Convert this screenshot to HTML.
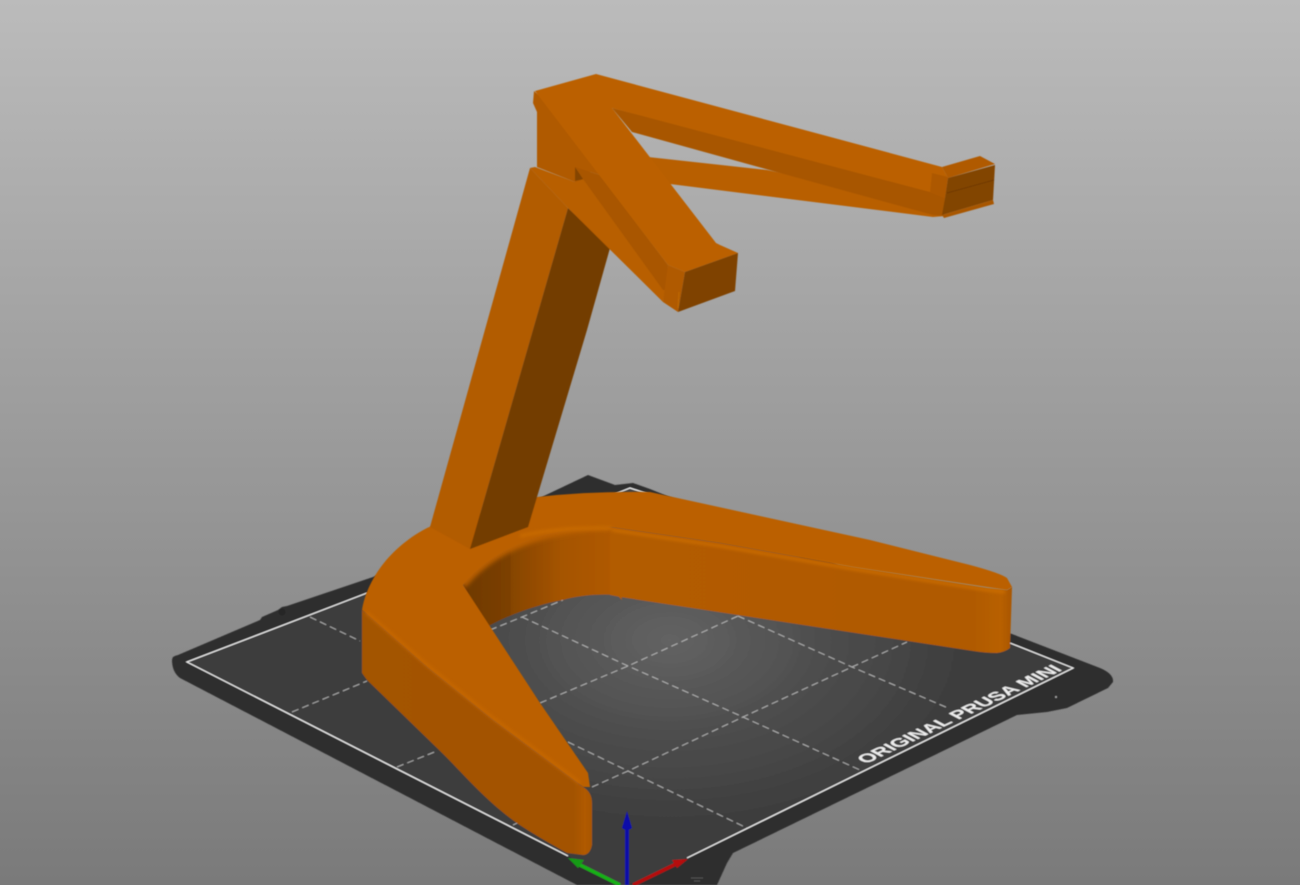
<!DOCTYPE html>
<html>
<head>
<meta charset="utf-8">
<style>
html,body{margin:0;padding:0;width:1300px;height:885px;overflow:hidden;background:#999}
svg{display:block}
text{font-family:"Liberation Sans",sans-serif}
</style>
</head>
<body>
<svg width="1300" height="885" viewBox="0 0 1300 885" xmlns="http://www.w3.org/2000/svg">
<defs>
<linearGradient id="bg" x1="0" y1="0" x2="0" y2="1">
<stop offset="0" stop-color="#bbbbbb"/><stop offset="1" stop-color="#7a7a7a"/>
</linearGradient>
<radialGradient id="plate" gradientUnits="userSpaceOnUse" cx="670" cy="640" r="300" gradientTransform="translate(670 640) scale(1 .62) translate(-670 -640)">
<stop offset="0" stop-color="#636363"/><stop offset=".5" stop-color="#4e4e4e"/><stop offset="1" stop-color="#3d3d3d"/>
</radialGradient>
<linearGradient id="wall" gradientUnits="userSpaceOnUse" x1="465" y1="0" x2="625" y2="0">
<stop offset="0" stop-color="#6f3900"/><stop offset=".28" stop-color="#7c4000"/><stop offset=".29" stop-color="#864500"/><stop offset=".6" stop-color="#a55400"/><stop offset="1" stop-color="#b25b00"/>
</linearGradient>
<linearGradient id="rside" gradientUnits="userSpaceOnUse" x1="620" y1="0" x2="1012" y2="0">
<stop offset="0" stop-color="#b25b00"/><stop offset=".9" stop-color="#b05a00"/><stop offset=".97" stop-color="#b86000"/><stop offset="1" stop-color="#a95600"/>
</linearGradient>
<linearGradient id="lside" gradientUnits="userSpaceOnUse" x1="362" y1="0" x2="592" y2="0">
<stop offset="0" stop-color="#a35400"/><stop offset=".92" stop-color="#a35300"/><stop offset=".97" stop-color="#b05a00"/><stop offset="1" stop-color="#a85600"/>
</linearGradient>
<filter id="b1" filterUnits="userSpaceOnUse" x="340" y="480" width="700" height="340"><feGaussianBlur stdDeviation="1.6"/></filter>
<filter id="b2" filterUnits="userSpaceOnUse" x="340" y="480" width="700" height="340"><feGaussianBlur stdDeviation="2.5"/></filter>
<filter id="b0" filterUnits="userSpaceOnUse" x="0" y="0" width="1300" height="885"><feGaussianBlur stdDeviation=".4"/></filter>
</defs>

<rect width="1300" height="885" fill="url(#bg)"/>

<g filter="url(#b0)">
<!-- bed -->
<path fill="#2f2f2f" d="M172,660 Q172,656 178,655 L260,620 L262,617 L278,610 L282,607 L287,606 L373,577 L588,475 L615,485 L633,483 L650,489 L1012,634 L1100,668 Q1114,674 1113,682 L1108,688 L1067,708 L1047,712 L1017,715 L733,853 L727,863 L717,885 L577,885 L180,678 Q172,672 172,660 Z"/>
<path fill="url(#plate)" d="M187,662 L367,593 L620,492 L630,488 L1073,668 L687,858 L628,885 L620,885 L568,856 Z"/>
<path fill="none" stroke="#f2f2f2" stroke-width="1.2" d="M568,856 L187,662 L367,593 M600,500 L620,492 L630,488 L648,494 M1010,643 L1073,668 L687,858"/>
<!-- grid -->
<g fill="none" stroke="#d6d6d6" stroke-width="1" stroke-dasharray="7 4" opacity=".72">
<path d="M292,712 L367,681 M490,630 L522,617 L563,600"/>
<path d="M397,767 L437,751 M540,703 L628,666 L738,616"/>
<path d="M513,825 L530,817 M592,787 L628,771 L743,717 L852,667 L907,642"/>
<path d="M310,617 L360,641"/>
<path d="M522,617 L628,666 L743,717 L860,770"/>
<path d="M568,742 L628,771 L747,828"/>
<path d="M738,616 L852,667 L948,708"/>
</g>
<text transform="matrix(0.9,-0.43,0.88,0.47,866,764)" font-size="18" font-weight="700" fill="#eeeeee" textLength="219" lengthAdjust="spacingAndGlyphs">ORIGINAL PRUSA MINI</text>
<circle cx="1056" cy="697" r="1" fill="#aaa"/>
<path d="M691,878 L703,878 M694,881 L700,881" stroke="#555" stroke-width="1"/>
<circle cx="282" cy="612" r="3.5" fill="#262626"/>

<!-- axes -->
<path d="M620,885 L578,864" stroke="#17b017" stroke-width="3.5"/>
<path d="M568,858 L584,860 L578,868 Z" fill="#149a14"/>
<path d="M633,885 L676,864" stroke="#b50d0d" stroke-width="3.5"/>
<path d="M688,859 L672,860 L677,868 Z" fill="#b50d0d"/>
<path d="M627,885 L627,828" stroke="#0a0aa8" stroke-width="4"/>
<path d="M627,811 L632,828 Q627,832 622,828 Z" fill="#0a0aa8"/>

<!-- wall -->
<path fill="url(#wall)" d="M463,585 C500,540 560,528 610,527 L622,600 L617,595 C600,594 580,595 563,600 C540,604 510,614 487,627 L470,600 Z"/>
<!-- right arm side -->
<path fill="url(#rside)" d="M610,527 L720,543 L853,567 L987,588 L1007,590 L1012,587 L1010,648 Q1005,652 997,653 Q985,653 973,651 L620,597 L610,595 Z"/>
<!-- left arm side -->
<path fill="url(#lside)" d="M362,610 L427,667 L493,720 L560,770 L583,787 Q592,792 592,803 L592,845 Q590,855 583,855 L567,853 C540,838 520,826 510,818 C480,795 460,770 437,748 L367,680 L362,673 Z"/>
</g>
<!-- soft lip under the top face -->
<path filter="url(#b2)" fill="none" stroke="#bb6100" stroke-width="7" d="M463,585 C500,540 560,528 610,527"/>
<g filter="url(#b0)">
<!-- top face -->
<path fill="#bb6100" d="M362,610 C366,585 385,550 427,528 L445,520 L500,510 L537,497 Q590,491 650,492 L870,540 L970,565 Q1000,573 1007,578 L1012,587 L1007,590 L853,567 L720,543 L610,527 C560,528 500,540 463,585 L540,703 L588,773 L590,787 L583,787 L493,720 L427,667 Z"/>
</g>
<!-- ridges -->
<g fill="none">
<path filter="url(#b1)" stroke="#cf7000" stroke-width="2.5" d="M612,530 L720,546 L853,569 L987,590 L1005,592"/>
<path filter="url(#b1)" stroke="#c66800" stroke-width="3" d="M366,612 L427,665 Q460,692 493,718 L560,768 L580,783"/>
<path filter="url(#b1)" stroke="#c96c00" stroke-width="3" d="M520,536 C550,529 580,528 612,528"/>
</g>

<g filter="url(#b0)">
<!-- column -->
<path fill="#b25c00" d="M430,527 L530,168 L568,208 L470,549 Z"/>
<path fill="#733c00" d="M568,208 L610,248 L587,330 L528,527 L470,549 Z"/>
<!-- post behind -->
<path fill="#b05a00" d="M537,108 L537,167 L575,182 L590,182 L590,160 L560,110 Z"/>
<path fill="#854500" d="M575,167 L575,181 L584,179 Z"/>

<!-- brace (rear) -->
<path fill="#b85f00" d="M648,157 L767,170 L933,205 L945,216 L933,217 L670,184 Z"/>
<!-- long arm underside -->
<path fill="#a85700" d="M612,108 L933,188 L945,198 L944,216 L933,215 L773,171 L632,132 Z"/>
<!-- lighter brace under diag -->
<path fill="#b85f00" d="M530,168 L535,167 L575,182 L584,179 L667,280 L663,302 L568,208 Z"/>
<!-- upper-left notch and underside strip -->
<path fill="#a95700" d="M575,167 L583,179 L663,290 L667,290 L668,265 L600,175 Z"/>
<path fill="#b05a00" d="M534,91 L533,103 L537,112 L575,167 L600,175 L560,115 Z"/>
<!-- joined top faces -->
<path fill="#bb6100" d="M535,91 L596,74 L942,167 L948,178 L945,198 L930,192 L612,108 L716,243 L720,245 L738,253 L685,272 L668,265 Z"/>
<!-- end block right -->
<path fill="#ad5900" d="M932,173 L948,177 L945,198 L930,192 Z"/>
<path fill="#b05a00" d="M942,167 L980,156 L995,164 L948,178 Z"/>
<path fill="#824400" d="M948,178 L995,165 L993,200 L942,215 L945,198 Z"/>
<path fill="#a85700" d="M942,215 L993,200 L994,204 L944,218 Z"/>
<path stroke="#6c3800" stroke-width=".8" fill="none" d="M947,193 L994,180"/>
<!-- near block -->
<path fill="#b05a00" d="M668,265 L685,272 L678,312 L663,302 Z"/>
<path fill="#7f4200" d="M685,272 L738,253 L735,291 L678,312 Z"/>
<path d="M679,292 L678,308" stroke="#cf7a10" stroke-width=".7" opacity=".7"/>
</g>
</svg>
</body>
</html>
